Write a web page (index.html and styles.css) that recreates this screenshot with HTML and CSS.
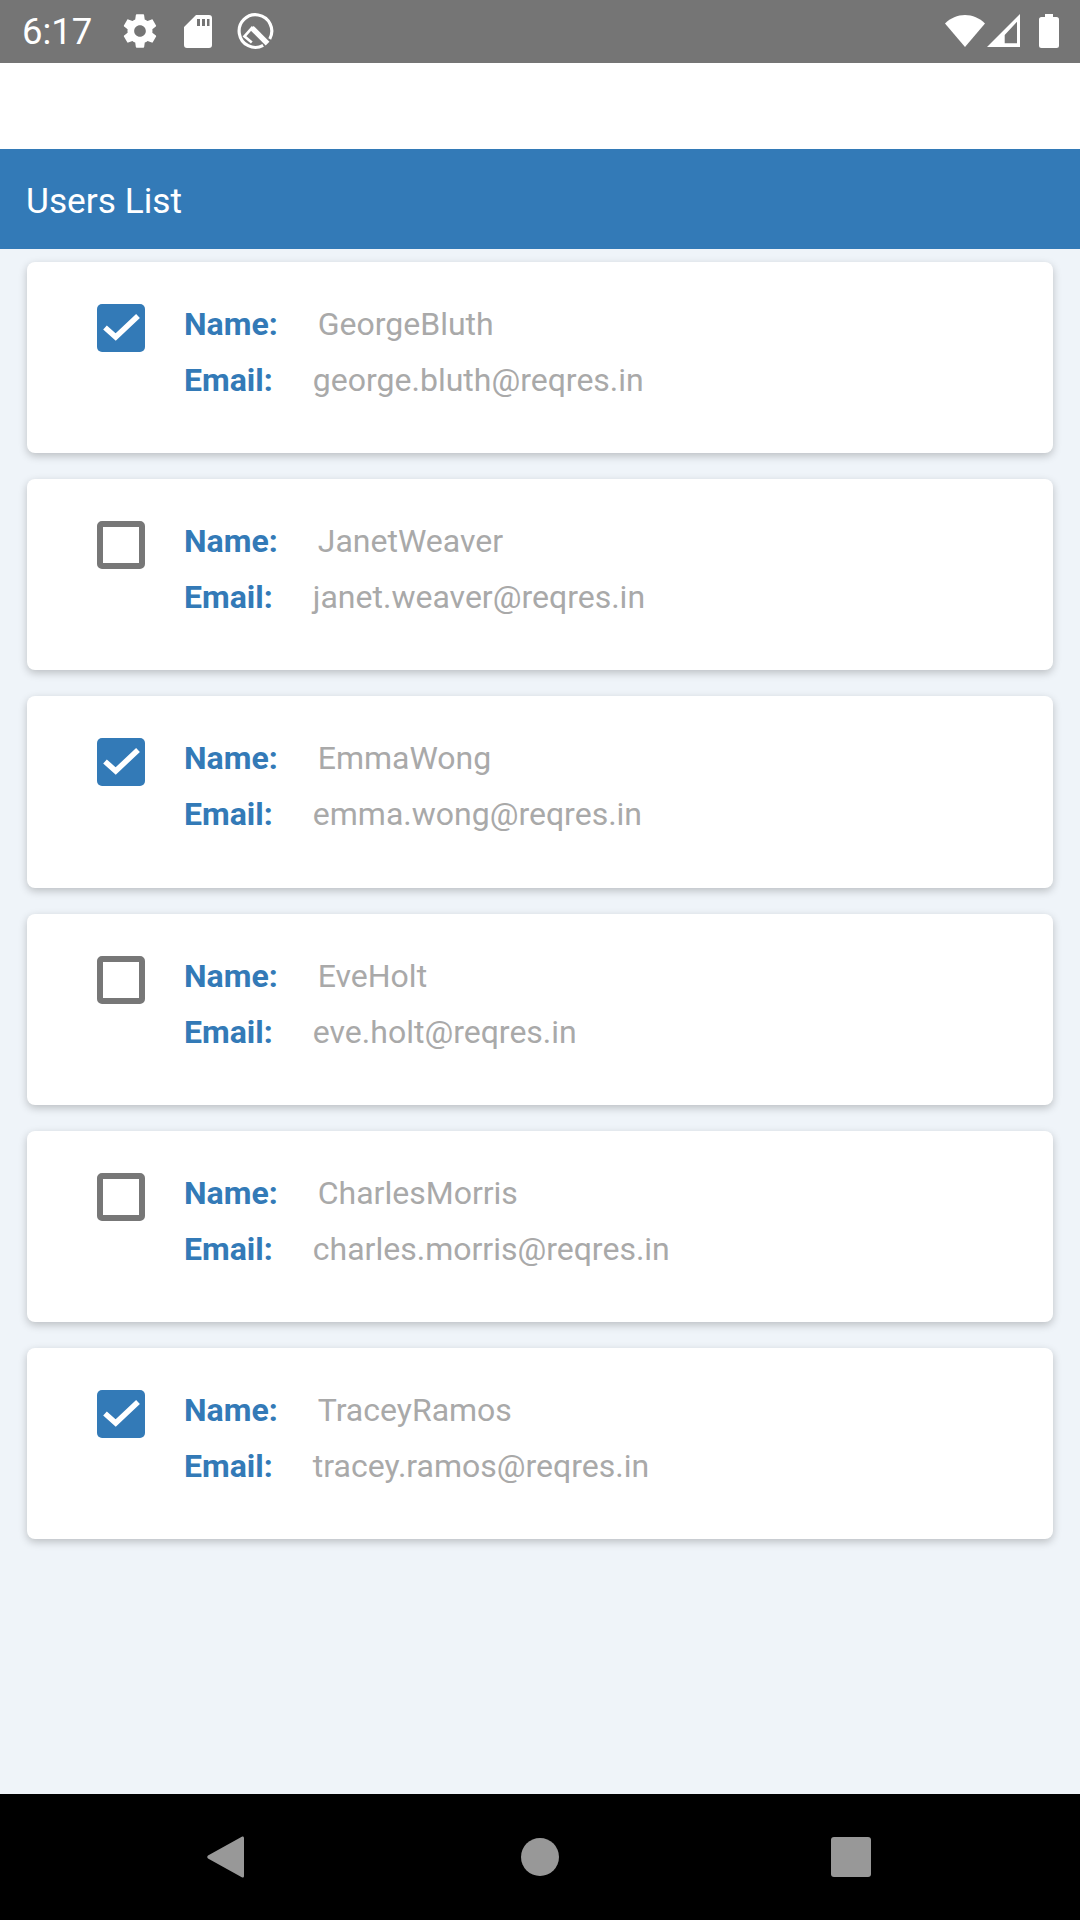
FILE: index.html
```html
<!DOCTYPE html>
<html lang="en">
  <head>
    <meta charset="UTF-8" />
    <meta name="viewport" content="width=device-width, initial-scale=1.0" />
    <title>Users List</title>
    <link rel="stylesheet" href="styles.css">
  </head>
  <body>
    <div class="status-bar">
      <div class="status-left">
        <span class="clock">6:17</span>
        <svg class="icon-gear" viewBox="0 0 24 24"><path fill="#fff" d="M19.4 13c.04-.32.07-.65.07-1s-.03-.68-.07-1l2.1-1.65c.19-.15.24-.42.12-.64l-2-3.46c-.12-.22-.39-.3-.61-.22l-2.49 1c-.52-.4-1.08-.73-1.69-.98l-.38-2.65C14.46 2.18 14.25 2 14 2h-4c-.25 0-.46.18-.49.42l-.38 2.65c-.61.25-1.17.59-1.69.98l-2.49-1c-.23-.09-.49 0-.61.22l-2 3.46c-.13.22-.07.49.12.64L4.57 11c-.04.32-.07.66-.07 1s.03.68.07 1l-2.11 1.65c-.19.15-.24.42-.12.64l2 3.46c.12.22.39.3.61.22l2.49-1c.52.4 1.08.73 1.69.98l.38 2.65c.03.24.24.42.49.42h4c.25 0 .46-.18.49-.42l.38-2.65c.61-.25 1.17-.59 1.69-.98l2.49 1c.23.09.49 0 .61-.22l2-3.46c.12-.22.07-.49-.12-.64L19.4 13zM12 15.5c-1.93 0-3.5-1.57-3.5-3.5s1.57-3.5 3.5-3.5 3.5 1.57 3.5 3.5-1.57 3.5-3.5 3.5z"/></svg>
        <svg class="icon-sd" viewBox="0 0 28 33"><path fill="#fff" fill-rule="evenodd" d="M12 0h13a3 3 0 0 1 3 3v27a3 3 0 0 1-3 3H3a3 3 0 0 1-3-3V12z M13 4v7h3V4z M18 4v7h3V4z M23 4v7h2.500V4z"/></svg>
        <svg class="icon-q" viewBox="0 0 38 38"><g fill="none" stroke="#fff"><path stroke-width="3" d="M32.060 26.500A15.500 15.500 0 1 0 25.800 32.700"/><path stroke-width="2.500" d="M16 15L8 24l7 6"/><path stroke-width="5" d="M15 16l15 15"/></g></svg>
      </div>
      <div class="status-right">
        <svg class="icon-wifi" viewBox="0 0 40 34"><path fill="#fff" d="M20 33L0 9.500C5.500 4 12.500 1 20 1s14.500 3 20 8.500z"/></svg>
        <svg class="icon-signal" viewBox="0 0 33 33"><path fill="#fff" fill-rule="evenodd" d="M33 0v33H0z M30 7.700L17.700 21v8.300H30z"/></svg>
        <svg class="icon-battery" viewBox="0 0 20 34"><path fill="#fff" d="M6 0h8v3h3.500A2.500 2.500 0 0 1 20 5.500V31.500a2.500 2.500 0 0 1-2.500 2.500H2.500A2.500 2.500 0 0 1 0 31.500V5.500A2.500 2.500 0 0 1 2.500 3H6z"/></svg>
      </div>
    </div>

    <div class="top-space"></div>
    <div class="header">Users List</div>

    <div class="users">
      <div class="card">
        <div class="checkbox checked"><svg viewBox="0 0 48 48"><path fill="none" stroke="#fff" stroke-width="5.500" d="M8 23.500L18.700 33 41 12"/></svg></div>
        <div class="info">
          <div class="row"><span class="label">Name:</span><span class="name">GeorgeBluth</span></div>
          <div class="row"><span class="label">Email:</span><span class="email">george.bluth@reqres.in</span></div>
        </div>
      </div>
      <div class="card">
        <div class="checkbox"></div>
        <div class="info">
          <div class="row"><span class="label">Name:</span><span class="name">JanetWeaver</span></div>
          <div class="row"><span class="label">Email:</span><span class="email">janet.weaver@reqres.in</span></div>
        </div>
      </div>
      <div class="card">
        <div class="checkbox checked"><svg viewBox="0 0 48 48"><path fill="none" stroke="#fff" stroke-width="5.500" d="M8 23.500L18.700 33 41 12"/></svg></div>
        <div class="info">
          <div class="row"><span class="label">Name:</span><span class="name">EmmaWong</span></div>
          <div class="row"><span class="label">Email:</span><span class="email">emma.wong@reqres.in</span></div>
        </div>
      </div>
      <div class="card">
        <div class="checkbox"></div>
        <div class="info">
          <div class="row"><span class="label">Name:</span><span class="name">EveHolt</span></div>
          <div class="row"><span class="label">Email:</span><span class="email">eve.holt@reqres.in</span></div>
        </div>
      </div>
      <div class="card">
        <div class="checkbox"></div>
        <div class="info">
          <div class="row"><span class="label">Name:</span><span class="name">CharlesMorris</span></div>
          <div class="row"><span class="label">Email:</span><span class="email">charles.morris@reqres.in</span></div>
        </div>
      </div>
      <div class="card">
        <div class="checkbox checked"><svg viewBox="0 0 48 48"><path fill="none" stroke="#fff" stroke-width="5.500" d="M8 23.500L18.700 33 41 12"/></svg></div>
        <div class="info">
          <div class="row"><span class="label">Name:</span><span class="name">TraceyRamos</span></div>
          <div class="row"><span class="label">Email:</span><span class="email">tracey.ramos@reqres.in</span></div>
        </div>
      </div>
    </div>

    <nav class="navbar">
      <svg class="nav-back" viewBox="0 0 38 42"><path fill="#989898" d="M37 2v38c0 1.500-1.200 2-2.200 1.300L1 22.500c-1-.8-1-2.200 0-3L34.800.7C35.800 0 37 .5 37 2z"/></svg>
      <div class="nav-home"></div>
      <div class="nav-recent"></div>
    </nav>
  </body>
</html>
```

FILE: styles.css
```css
* {
  margin: 0;
  padding: 0;
  box-sizing: border-box;
  font-family: Roboto, sans-serif;
}

:root {
  --primary: #337ab7;
  --bg-color: #eff4f9;
  --text-light: #a9a9a9;
}

body {
  width: 1080px;
  height: 1920px;
  display: flex;
  flex-direction: column;
  background: var(--bg-color);
  overflow: hidden;
}

.status-bar {
  height: 63px;
  background: #757575;
  display: flex;
  align-items: center;
  justify-content: space-between;
  padding: 0 21px 2px 22px;
}

.status-left,
.status-right {
  display: flex;
  align-items: center;
}

.clock {
  color: white;
  font-size: 36.5px;
  width: 98px;
  padding-top: 2px;
}

.icon-gear {
  width: 40px;
  height: 40px;
  margin-right: 24px;
}

.icon-sd {
  width: 28px;
  height: 33px;
  margin: 2px 24px 0 0;
}

.icon-q {
  width: 40px;
  height: 40px;
}

.icon-wifi {
  width: 40px;
  height: 34px;
  margin-right: 2px;
}

.icon-signal {
  width: 33px;
  height: 33px;
  margin-right: 19px;
}

.icon-battery {
  width: 20px;
  height: 34px;
}

.top-space {
  height: 86px;
  background: white;
}

.header {
  height: 100px;
  background: var(--primary);
  color: white;
  font-size: 35.3px;
  line-height: 100px;
  padding: 2px 0 0 26px;
}

.users {
  flex: 1;
  display: flex;
  flex-direction: column;
  gap: 26px;
  padding: 13px 27px 0;
}

.card {
  height: 191.2px;
  background: white;
  border-radius: 8px;
  box-shadow: 0 3px 8px rgba(0, 0, 0, 0.22);
  display: flex;
  align-items: flex-start;
  padding: 42px 0 0 70px;
}

.checkbox {
  width: 48px;
  height: 48px;
  border: 6px solid #777;
  border-radius: 5px;
  margin-right: 39px;
}

.checkbox.checked {
  border: 0;
  background: var(--primary);
}

.checkbox svg {
  display: block;
  width: 48px;
  height: 48px;
}

.info {
  display: flex;
  flex-direction: column;
  gap: 18.500px;
  padding-top: 2px;
}

.row {
  display: flex;
  font-size: 32px;
  line-height: 37.5px;
}

.label {
  color: var(--primary);
  font-weight: 700;
}

.name,
.email {
  color: var(--text-light);
  margin-left: 40px;
}

.navbar {
  height: 126px;
  background: black;
  position: relative;
}

.nav-back {
  position: absolute;
  left: 207px;
  top: 42px;
  width: 38px;
  height: 42px;
}

.nav-home {
  position: absolute;
  left: 521px;
  top: 44px;
  width: 38px;
  height: 38px;
  border-radius: 50%;
  background: #989898;
}

.nav-recent {
  position: absolute;
  left: 831px;
  top: 43px;
  width: 40px;
  height: 40px;
  border-radius: 3px;
  background: #989898;
}
```
